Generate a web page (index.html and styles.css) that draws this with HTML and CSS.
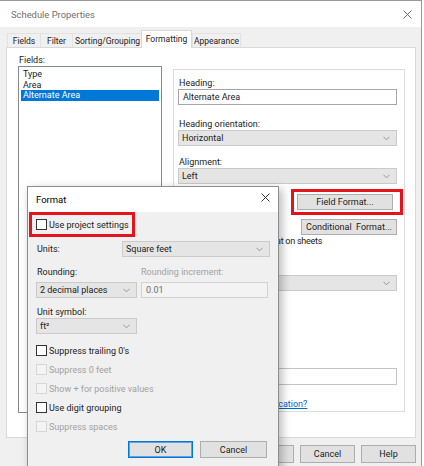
FILE: index.html
```html
<!DOCTYPE html>
<html>
<head>
<meta charset="utf-8">
<title>Schedule Properties</title>
<link rel="stylesheet" href="styles.css">
</head>
<body>
<div class="window">
  <div class="titlebar">
    <span class="title">Schedule Properties</span>
    <svg class="close-main" viewBox="0 0 9 9" width="9" height="9"><path d="M0.5 0.5L8.5 8.5M8.5 0.5L0.5 8.5" stroke="#5c5c5c" stroke-width="0.9" fill="none"/></svg>
  </div>
  <div class="client">
    <div class="tabs">
      <div class="tab t-fields">Fields</div>
      <div class="tab t-filter">Filter</div>
      <div class="tab t-sort">Sorting/Grouping</div>
      <div class="tab active t-format">Formatting</div>
      <div class="tab t-appear">Appearance</div>
    </div>
    <div class="panel">
      <div class="fields-col">
        <div class="lbl">Fields:</div>
        <div class="listbox">
          <div class="item">Type</div>
          <div class="item">Area</div>
          <div class="item sel">Alternate Area</div>
        </div>
      </div>
      <div class="group">
        <div class="lbl">Heading:</div>
        <div class="input">Alternate Area</div>
        <div class="lbl gap13">Heading orientation:</div>
        <div class="select"><span>Horizontal</span><svg class="chev" viewBox="0 0 8 5" width="7" height="5"><polyline points="0.5,0.5 4,4 7.5,0.5" fill="none" stroke="#8a8a8a" stroke-width="1"/></svg></div>
        <div class="lbl gap10">Alignment:</div>
        <div class="select"><span>Left</span><svg class="chev" viewBox="0 0 8 5" width="7" height="5"><polyline points="0.5,0.5 4,4 7.5,0.5" fill="none" stroke="#8a8a8a" stroke-width="1"/></svg></div>
        <div class="btn-row first">
          <span>Field formatting:</span>
          <div class="highlight hl-field"><div class="btn w96">Field Format...</div></div>
        </div>
        <div class="btn-row second">
          <span class="check-line"><span class="box"></span>Hidden field</span>
          <div class="btn w96">Conditional&nbsp; Format...</div>
        </div>
        <div class="check-line cond"><span class="box"></span><span class="cond-text">Show conditional format on sheets</span></div>
        <div class="select totals"><span>Calculate totals</span><svg class="chev" viewBox="0 0 8 5" width="7" height="5"><polyline points="0.5,0.5 4,4 7.5,0.5" fill="none" stroke="#8a8a8a" stroke-width="1"/></svg></div>
        <div class="lbl tip-lbl">Tooltip:</div>
        <div class="input tall"></div>
        <div class="link">How do I view the specification?</div>
      </div>
    </div>
    <div class="main-buttons">
      <div class="btn w55">OK</div>
      <div class="btn w55">Cancel</div>
      <div class="btn w55">Help</div>
    </div>
  </div>
</div>

<div class="dialog">
  <div class="dlg-title">
    <span class="dlg-name">Format</span>
    <svg class="close-dlg" viewBox="0 0 9 9" width="9" height="9"><path d="M0.5 0.5L8.5 8.5M8.5 0.5L0.5 8.5" stroke="#222" stroke-width="0.9" fill="none"/></svg>
  </div>
  <div class="dlg-body">
    <div class="highlight hl-project"><span class="box"></span>Use project settings</div>
    <div class="units-row">
      <span>Units:</span>
      <div class="select units"><span>Square feet</span><svg class="chev" viewBox="0 0 8 5" width="7" height="5"><polyline points="0.5,0.5 4,4 7.5,0.5" fill="none" stroke="#8a8a8a" stroke-width="1"/></svg></div>
    </div>
    <div class="two-col labels">
      <span class="col-a">Rounding:</span>
      <span class="col-b disabled">Rounding increment:</span>
    </div>
    <div class="two-col controls">
      <div class="select col-a"><span>2 decimal places</span><svg class="chev" viewBox="0 0 8 5" width="7" height="5"><polyline points="0.5,0.5 4,4 7.5,0.5" fill="none" stroke="#8a8a8a" stroke-width="1"/></svg></div>
      <div class="input col-b off">0.01</div>
    </div>
    <div class="lbl sym-lbl">Unit symbol:</div>
    <div class="select sym"><span>ft²</span><svg class="chev" viewBox="0 0 8 5" width="7" height="5"><polyline points="0.5,0.5 4,4 7.5,0.5" fill="none" stroke="#8a8a8a" stroke-width="1"/></svg></div>
    <div class="checks">
      <div class="check-line row"><span class="box"></span>Suppress trailing 0's</div>
      <div class="check-line row disabled"><span class="box"></span>Suppress 0 feet</div>
      <div class="check-line row disabled"><span class="box"></span>Show + for positive values</div>
      <div class="check-line row"><span class="box"></span>Use digit grouping</div>
      <div class="check-line row disabled"><span class="box"></span>Suppress spaces</div>
    </div>
    <div class="dlg-buttons">
      <div class="btn ok">OK</div>
      <div class="btn cancel">Cancel</div>
    </div>
  </div>
</div>
</body>
</html>
```

FILE: styles.css
```css
* { box-sizing: border-box; }
html, body { margin: 0; padding: 0; }
body {
  width: 424px;
  height: 466px;
  overflow: hidden;
  position: relative;
  background: #ffffff;
  font-family: Roboto, "Noto Sans", sans-serif;
  font-size: 9px;
  color: #1c1c1c;
}

/* ---------- main window ---------- */
.window {
  width: 422px;
  height: 466px;
  border-top: 1px solid #9a9a9a;
  border-right: 1px solid #9a9a9a;
  background: #f0f0f0;
  display: flex;
  flex-direction: column;
}
.titlebar {
  height: 26px;
  flex: none;
  background: #ffffff;
  display: flex;
  align-items: center;
  padding: 0 9px 0 11px;
}
.title { flex: 1; font-size: 9.4px; color: #6f6f6f; }
.close-main { display: block; }

.client {
  display: flex;
  flex-direction: column;
  padding: 0 5px 0 6px;
}
.tabs {
  height: 20px;
  display: flex;
  align-items: flex-end;
  padding-left: 1px;
  font-size: 8.5px;
}
.tab {
  height: 14px;
  display: flex;
  align-items: center;
  justify-content: center;
  border: 1px solid #e2e2e2;
  border-bottom: none;
  margin-right: -1px;
  background: #f0f0f0;
  white-space: nowrap;
}
.t-fields { width: 34px; }
.t-filter { width: 33px; }
.t-sort { width: 71px; }
.t-format { width: 51px; }
.t-appear { width: 49px; }
.tab.active {
  height: 18px;
  margin: 0 0 -1px -1px;
  padding-bottom: 2px;
  background: #ffffff;
  border-color: #d9d9d9;
  position: relative;
  z-index: 1;
}
.panel {
  height: 391px;
  background: #ffffff;
  border: 1px solid #d9d9d9;
  display: flex;
  padding: 6px 0 0 11px;
}
.lbl { height: 12px; line-height: 12px; padding-left: 1px; }
.fields-col { width: 144px; }
.listbox {
  height: 347px;
  border: 1px solid #828790;
  padding: 2px 1px 0;
}
.item { line-height: 10.5px; height: 10.5px; padding-left: 2px; margin: 0 1px; }
.item.sel { background: #0078d7; color: #ffffff; }

.group {
  margin: 15px 0 0 11px;
  width: 232px;
  height: 343px;
  border: 1px solid #dcdcdc;
  padding: 7px 7px 0 4px;
  display: flex;
  flex-direction: column;
}
.gap13 { margin-top: 13px; }
.gap10 { margin-top: 10px; }

.input {
  height: 16px;
  border: 1px solid #a6a6a6;
  background: #ffffff;
  padding-left: 4px;
  display: flex;
  align-items: center;
}
.input.tall { height: 17px; margin-top: 1px; border-color: #c4c4c4; }
.select {
  height: 16px;
  border: 1px solid #cacaca;
  background: #e5e5e5;
  padding: 0 6px 0 3px;
  display: flex;
  align-items: center;
  justify-content: space-between;
}
.chev { display: block; }

.btn {
  height: 16px;
  border: 1px solid #adadad;
  background: #e1e1e1;
  display: flex;
  align-items: center;
  justify-content: center;
}
.w96 { width: 96px; }
.w55 { width: 55px; height: 18px; }

.btn-row {
  display: flex;
  align-items: center;
  justify-content: space-between;
}
.btn-row.first { margin-top: 5px; }
.btn-row.second { margin-top: 4px; }
.highlight {
  border: 3px solid #e3141c;
}
.hl-field {
  width: 112px;
  height: 26px;
  padding: 2px 7px 2px 3px;
  margin-right: -6px;
}

.check-line {
  display: flex;
  align-items: center;
  line-height: 12px;
}
.box {
  width: 11px;
  height: 11px;
  border: 1px solid #333333;
  background: #ffffff;
  margin-right: 2px;
  flex: none;
}
.cond { margin-top: 0; }
.cond-text { letter-spacing: -0.25px; }
.totals { margin-top: 28px; }
.tip-lbl { margin-top: 64px; }
.link {
  margin-top: 13px;
  line-height: 12px;
  padding-left: 1px;
  color: #0066cc;
  text-decoration: underline;
}

.main-buttons {
  margin-top: 7px;
  display: flex;
  justify-content: flex-end;
  gap: 6px;
}

/* ---------- Format dialog (overlay) ---------- */
.dialog {
  position: absolute;
  left: 27px;
  top: 186px;
  width: 252px;
  height: 292px;
  background: #f0f0f0;
  border: 1px solid #8e8e8e;
  box-shadow: 3px 3px 9px rgba(0, 0, 0, 0.28);
}
.dlg-title {
  height: 25px;
  background: #ffffff;
  display: flex;
  align-items: center;
  padding: 0 8px 0 8px;
}
.dlg-name { flex: 1; font-size: 9.5px; color: #000000; }
.close-dlg { display: block; margin-top: -5px; }

.dlg-body {
  padding: 0 8px;
  display: flex;
  flex-direction: column;
}
.hl-project {
  width: 106px;
  height: 25px;
  margin-left: -7px;
  padding-left: 4px;
  display: flex;
  align-items: center;
}
.units-row {
  margin-top: 4px;
  height: 16px;
  display: flex;
  align-items: center;
  justify-content: space-between;
  padding-left: 1px;
}
.select.units { width: 148px; }
.two-col { display: flex; align-items: center; }
.two-col.labels { margin-top: 9px; height: 12px; padding-left: 1px; }
.two-col.controls { margin-top: 4px; }
.col-a { width: 105px; flex: none; }
.labels .col-a { width: 104px; }
.select.col-a { width: 101px; margin-right: 4px; }
.input.col-b { width: 127px; }
.disabled { color: #a2a2a2; }
.input.off {
  background: #f3f3f3;
  border-color: #d2d2d2;
  color: #6d6d6d;
  margin-top: -1px;
}
.sym-lbl { margin-top: 8px; }
.select.sym { width: 101px; }
.checks { margin-top: 7px; display: flex; flex-direction: column; }
.check-line.row { height: 19px; }
.check-line.disabled .box { border-color: #d6d6d6; background: #f4f4f4; }
.dlg-buttons {
  margin-top: 5px;
  display: flex;
  justify-content: flex-end;
  gap: 7px;
  padding-right: 3px;
}
.btn.ok { width: 65px; height: 17px; border-color: #0078d7; box-shadow: inset 0 0 0 1px #5aa3e0; }
.btn.cancel { width: 67px; height: 17px; }
```
